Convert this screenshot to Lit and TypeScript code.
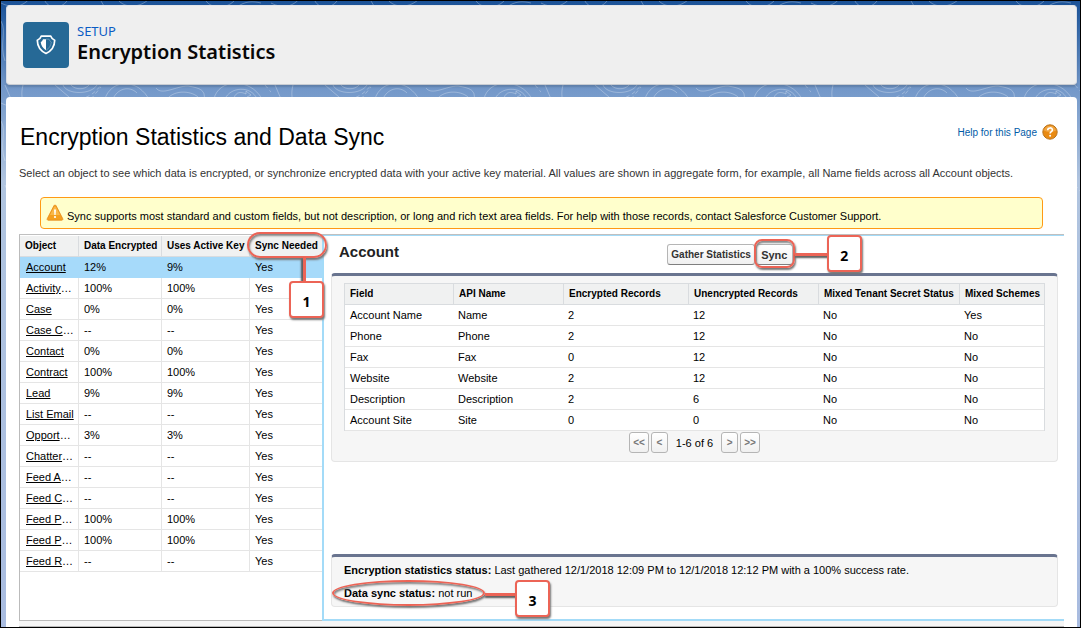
import { LitElement, html, css, svg } from "lit";
import { customElement } from "lit/decorators.js";
import { classMap } from "lit/directives/class-map.js";

interface ObjectRow { name: string; clipped?: boolean; encrypted: string; active: string; }

const OBJECTS: ObjectRow[] = [
  { name: "Account", encrypted: "12%", active: "9%" },
  { name: "Activity", clipped: true, encrypted: "100%", active: "100%" },
  { name: "Case", encrypted: "0%", active: "0%" },
  { name: "Case C", clipped: true, encrypted: "--", active: "--" },
  { name: "Contact", encrypted: "0%", active: "0%" },
  { name: "Contract", encrypted: "100%", active: "100%" },
  { name: "Lead", encrypted: "9%", active: "9%" },
  { name: "List Email", encrypted: "--", active: "--" },
  { name: "Opport", clipped: true, encrypted: "3%", active: "3%" },
  { name: "Chatter", clipped: true, encrypted: "--", active: "--" },
  { name: "Feed A", clipped: true, encrypted: "--", active: "--" },
  { name: "Feed C", clipped: true, encrypted: "--", active: "--" },
  { name: "Feed P", clipped: true, encrypted: "100%", active: "100%" },
  { name: "Feed P", clipped: true, encrypted: "100%", active: "100%" },
  { name: "Feed R", clipped: true, encrypted: "--", active: "--" },
];

const FIELDS: string[][] = [
  ["Account Name", "Name", "2", "12", "No", "Yes"],
  ["Phone", "Phone", "2", "12", "No", "No"],
  ["Fax", "Fax", "0", "12", "No", "No"],
  ["Website", "Website", "2", "12", "No", "No"],
  ["Description", "Description", "2", "6", "No", "No"],
  ["Account Site", "Site", "0", "0", "No", "No"],
];

const FIELD_HEADS = ["Field", "API Name", "Encrypted Records", "Unencrypted Records", "Mixed Tenant Secret Status", "Mixed Schemes"];

const contours = svg`
  <defs>
    <pattern id="topo" width="270" height="100" patternUnits="userSpaceOnUse">
      <g fill="none" stroke="#ffffff" stroke-opacity=".28" stroke-width="1">
        <path d="M0 2c12 6 22 4 30-6M44 0c4 8 16 8 22 0M100 0l6 10M118 0c8 8 22 6 30-2M205 0c6 8 20 8 28 0M236 6c8-6 16-6 24-4"/>
        <path d="M4 84l6 14M22 100c-2-6-1-12 0-16M54 84l14 12M62 84c4 10 28 10 34 0M70 84c4 5 14 5 18 0"/>
        <path d="M104 98c4-14 20-20 34-11 5 4 8 7 10 12M112 98c4-10 16-14 24-6M155 87c6 8 20-2 32-2 12 2 18 4 16 14M166 98c8-10 26-8 32-1"/>
        <path d="M213 98c4-20 36-22 48 0M224 98c5-12 26-14 32 0M233 97c2-7 8-6 12-4v-3l5 4-4 2"/>
        <path stroke-dasharray="4 3" d="M78 98c9-1 16-6 22-14M90 98l10-12M264 84l12 14"/>
        <path d="M0 20c6 10-2 24 4 40"/>
      </g>
    </pattern>
  </defs>
  <rect width="100%" height="100%" fill="url(#topo)"></rect>`;

@customElement("app-root")
export class AppRoot extends LitElement {
  static styles = css`
    :host { display: block; font: 11px/14px "Liberation Sans", Arial, sans-serif; color: #000; }
    * { box-sizing: border-box; }
    .page { position: relative; display: flex; flex-direction: column; gap: 12px; min-height: 100vh;
      padding: 4px 3px 0 5px; border: 1px solid #000;
      background: linear-gradient(#1b5297 0, #2c62a5 20px, #7398c9 88px, #b0c4df 180px, #a9bce0 100%); overflow: hidden; }
    .contours { position: absolute; inset: 0; width: 100%; height: 200px; }
    .banner, .card { position: relative; border-radius: 4px; }
    .banner { display: flex; align-items: center; gap: 8px; height: 80px; padding: 0 16px 1px;
      background: #efefef; border: 1px solid #d8dde6; border-color: #e4e6ea #d8dde6 #c8ccd2; box-shadow: 0 2px 2px rgba(0,0,0,.15); }
    .tile { display: flex; align-items: center; justify-content: center; width: 46px; height: 46px; border-radius: 4px; background: #266996; }
    .eyebrow { font: 13px/18px "Noto Sans", sans-serif; color: #0b5cc4; margin: 0; }
    .product { font: 600 20px/24px "Noto Sans", sans-serif; color: #080707; margin: 0 0 3px; }
    .card { flex: 1; display: flex; flex-direction: column; padding: 25px 13px 0 13px; background: #fff; border-radius: 4px 4px 0 0; }
    .top { display: flex; justify-content: space-between; align-items: flex-start; }
    h1 { margin: 0; padding-left: 1px; font-size: 23px; line-height: 30px; font-weight: 400; }
    .help { display: flex; align-items: center; gap: 5px; margin-right: 6px; color: #015ba7; text-decoration: none; font-size: 10px; line-height: 18px; }
    .help span { padding-top: 2px; }
    .intro { margin: 14px 0 0; color: #333; }
    .warn { display: flex; align-items: center; gap: 3px; height: 32px; margin: 17px 21px 5px; padding: 0 5px; background: #ffffcc;
      border: 1px solid #ff9a14; border-radius: 4px; }
    .warn svg { margin-bottom: 1px; }
    .warn p { margin: 6px 0 0; }
    .split { flex: 1; display: grid; grid-template-columns: 303px minmax(0, 1fr); border-top: 1px solid #c0c0c0; }
    .left { border-left: 1px solid #bbb; border-bottom: 1px solid #bbb; padding-top: 1px; }
    table { border-collapse: separate; border-spacing: 0; table-layout: fixed; width: 100%; }
    th, td { height: 21px; padding: 0 0 0 5px; text-align: left; white-space: nowrap; line-height: 20px; border: 0 solid #e5e5e5; border-width: 0 1px 1px 0; }
    th { background: #f0f1f1; border-color: #d9dcdf; font-size: 10px; font-weight: 700; }
    .left tr > :last-child { border-right: 0; }
    .left td { background: #fff; }
    .left td:first-child { padding-left: 6px; }
    .left .on td { background: #a6dafa; border-color: #a6dafa; }
    .left a { color: #000; text-decoration: underline; }
    .c1 { width: 59px; } .c2 { width: 83px; } .c3 { width: 88px; }
    .right { position: relative; display: flex; flex-direction: column; padding: 0 6px 12px 7px; border: solid #a3dbf8; border-width: 1px 0 2px 2px; }
    .bar { display: flex; align-items: center; height: 37px; padding-left: 8px; }
    h2 { flex: 1; margin: 0; padding-bottom: 5px; font-size: 15px; line-height: 20px; color: #222; }
    .actions { flex: 1.19; display: flex; }
    button { font: 700 10px/14px "Liberation Sans", Arial, sans-serif; color: #333; height: 21px; padding: 0 3px; border: 1px solid #b5b5b5;
      border-bottom-color: #7f7f7f; border-radius: 3px; background: linear-gradient(#fff, #f0f0f0); white-space: nowrap; }
    .actions .anchor button { width: 37px; margin-left: 1px; font-size: 11px; }
    .box { background: #f6f6f6; border: 1px solid #e5e5e5; border-top: 3px solid #69748f; border-radius: 4px; }
    .fields { padding: 7px 12px 8px; }
    .fields table { border: 1px solid #d9dcdf; border-bottom: 0; }
    .fields td { background: #fff; border-right: 0; }
    .fields td + td { padding-left: 4px; }
    .fields tr > :last-child { border-right: 0; }
    .f1 { width: 109px; } .f2 { width: 110px; } .f3 { width: 125px; } .f4 { width: 130px; } .f5 { width: 141px; }
    .pager { display: flex; justify-content: center; align-items: center; gap: 2px; padding-top: 1px; }
    .pager button { color: #777; border-color: #b5b5b5; min-width: 17px; }
    .pager span { padding: 0 6px; }
    .status { margin-top: auto; height: 53px; padding: 6px 12px 0; }
    .status p { margin: 0 0 9px; }
    .foot { height: 6px; background: #f6f6f6; border-bottom: 1px solid #bbb; }
    .anchor { position: relative; }
    .ring { position: absolute; border: 2px solid #ec6456; box-shadow: 1px 2px 2px #777, inset 1px 2px 2px #888; pointer-events: none; z-index: 2; }
    .line { position: absolute; background: #ec6456; z-index: 2; }
    .num { position: absolute; display: flex; align-items: center; justify-content: center; padding-top: 5px; width: 35px; height: 37px; background: #fff;
      border: 2px solid #ec6456; border-radius: 4px; box-shadow: 1px 2px 2px #777; font: 700 14px/18px "Noto Sans", sans-serif; z-index: 3; }
    .ring1 { left: -8px; top: -4px; width: 80px; height: 26px; border-radius: 13px; }
    .line1 { left: 48px; top: 22px; width: 3px; height: 26px; box-shadow: -2px 1px 2px #555; }
    .num1 { left: 34px; top: 45px; }
    .ring2 { left: -1px; top: -5px; width: 41px; height: 29px; border-radius: 8px; }
    .line2 { left: 40px; top: 9px; width: 34px; height: 3px; box-shadow: 0 2px 2px #555; }
    .num2 { left: 72px; top: -9px; }
    .ring3 { left: -12px; top: -6px; width: 153px; height: 26px; border-radius: 50%; }
    .line3 { left: 141px; top: 7px; width: 32px; height: 3px; box-shadow: 0 2px 2px #555; }
    .num3 { left: 171px; top: -6px; }
  `;

  render() {
    return html`
      <div class="page">
        <svg class="contours" aria-hidden="true">${contours}</svg>
        <header class="banner">
          <div class="tile">
            <svg width="20" height="20" viewBox="0 0 20 20" aria-hidden="true">
              <path d="M5.200 1.200h9.600c.8 2.200 2 3.400 3.900 4C18.600 11.200 15.200 16 10 18.400 4.800 16 1.400 11.200 1.300 5.200c1.900-.6 3.100-1.800 3.900-4z" fill="none" stroke="#fff" stroke-width="1.700" stroke-linejoin="round"/>
              <path d="M10 4.200H7C6.500 5.600 5.700 6.500 4.700 7.100c.4 3.500 2.100 6.300 5.300 8.200z" fill="#fff"/>
              <path d="M10 4.200h3c.5 1.400 1.300 2.300 2.300 2.900-.4 3.500-2.100 6.300-5.300 8.200" fill="none" stroke="#fff" stroke-opacity=".45" stroke-width=".6"/>
            </svg>
          </div>
          <div>
            <p class="eyebrow">SETUP</p>
            <p class="product">Encryption Statistics</p>
          </div>
        </header>
        <main class="card">
          <div class="top">
            <h1>Encryption Statistics and Data Sync</h1>
            <a class="help" href="#"><span>Help for this Page</span>
              <svg width="16" height="16" viewBox="0 0 16 16" aria-hidden="true">
                <circle cx="8" cy="8" r="7.200" fill="#e98a12" stroke="#b9741e"/>
                <path d="M2 6.500a6.200 6.200 0 0 1 12 0C10 8.500 6 8.500 2 6.500z" fill="#f7b860" opacity=".6"/>
                <path d="M5.700 6.200c0-3 4.700-3 4.700-.2 0 1.700-2.300 1.600-2.300 3.500" fill="none" stroke="#fff" stroke-width="1.600"/>
                <circle cx="8.100" cy="11.800" r="1" fill="#fff"/>
              </svg>
            </a>
          </div>
          <p class="intro">Select an object to see which data is encrypted, or synchronize encrypted data with your active key material. All values are shown in aggregate form, for example, all Name fields across all Account objects.</p>
          <div class="warn" role="note">
            <svg width="18" height="18" viewBox="0 0 18 18" aria-hidden="true">
              <path d="M8 1.600c.5-.8 1.500-.8 2 0l6.700 13c.4.800 0 1.600-.9 1.600H2.200c-.9 0-1.300-.8-.9-1.600z" fill="#f5a01f" stroke="#e58a1b" stroke-width=".8"/>
              <path d="M8.200 3 4 11h10L9.800 3c-.4-.7-1.200-.7-1.600 0z" fill="#fbc25c" opacity=".7"/>
              <path d="M8 5.500h2l-.4 5.500H8.400z" fill="#fff"/><circle cx="9" cy="13" r="1.100" fill="#fff"/>
            </svg>
            <p>Sync supports most standard and custom fields, but not description, or long and rich text area fields. For help with those records, contact Salesforce Customer Support.</p>
          </div>
          <div class="split">
            <section class="left">
              <table>
                <thead><tr>
                  <th class="c1">Object</th><th class="c2">Data Encrypted</th><th class="c3">Uses Active Key</th>
                  <th><div class="anchor">Sync Needed<i class="ring ring1"></i><i class="line line1"></i><span class="num num1">1</span></div></th>
                </tr></thead>
                <tbody>
                  ${OBJECTS.map((o, i) => html`<tr class=${classMap({ on: i === 0 })}>
                    <td><a href="#">${o.name}</a>${o.clipped ? "…" : ""}</td><td>${o.encrypted}</td><td>${o.active}</td><td>Yes</td></tr>`)}
                </tbody>
              </table>
            </section>
            <section class="right">
              <div class="bar">
                <h2>Account</h2>
                <div class="actions">
                  <button>Gather Statistics</button>
                  <div class="anchor"><button>Sync</button><i class="ring ring2"></i><i class="line line2"></i><span class="num num2">2</span></div>
                </div>
              </div>
              <div class="box fields">
                <table>
                  <thead><tr>${FIELD_HEADS.map((h, i) => html`<th class="f${i + 1}">${h}</th>`)}</tr></thead>
                  <tbody>${FIELDS.map(r => html`<tr>${r.map(v => html`<td>${v}</td>`)}</tr>`)}</tbody>
                </table>
                <nav class="pager" aria-label="Pages">
                  <button>&lt;&lt;</button><button>&lt;</button><span>1-6 of 6</span><button>&gt;</button><button>&gt;&gt;</button>
                </nav>
              </div>
              <div class="box status">
                <p><b>Encryption statistics status:</b> Last gathered 12/1/2018 12:09 PM to 12/1/2018 12:12 PM with a 100% success rate.</p>
                <p class="anchor"><b>Data sync status:</b> not run<i class="ring ring3"></i><i class="line line3"></i><span class="num num3">3</span></p>
              </div>
            </section>
          </div>
          <div class="foot"></div>
        </main>
      </div>`;
  }
}
